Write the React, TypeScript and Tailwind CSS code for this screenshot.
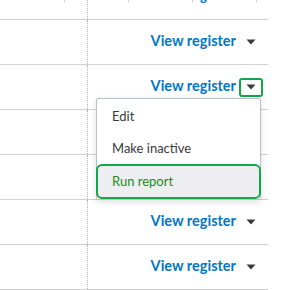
import React from "react";

function Caret({ focused }: { focused?: boolean }) {
  return (
    <div
      className={
        "w-[24px] h-[19px] flex items-center justify-center rounded-[3px] border-2 " +
        (focused ? "border-[#10a84a]" : "border-transparent")
      }
    >
      <svg width="10" height="6" viewBox="0 0 10 6">
        <path d="M0.5 0.5 L9.5 0.5 L5 5.5 Z" fill="#393a3d" />
      </svg>
    </div>
  );
}

function Row({ focused, showLink = true }: { focused?: boolean; showLink?: boolean }) {
  return (
    <div className="h-[45px] w-[268px] flex border-b border-[#d0d0d0]">
      <div className="w-[88px] shrink-0 border-r border-dotted border-[#b0b0b0]" />
      <div className="flex-1 flex items-center justify-end pr-[5px] gap-[3px]">
        {showLink && (
          <>
            <span className="text-[#0077c5] font-bold text-[14.5px] leading-none pb-[2px]">
              View register
            </span>
            <Caret focused={focused} />
          </>
        )}
      </div>
    </div>
  );
}

export default function App() {
  return (
    <div
      className="relative w-[281px] h-[290px] overflow-hidden bg-white"
      style={{ fontFamily: "Lato, 'Open Sans', Arial, sans-serif" }}
    >
      <div className="relative h-[20px] w-[268px] flex border-b border-[#d0d0d0]">
        <div className="w-[88px] shrink-0 border-r border-dotted border-[#b0b0b0]" />
        <div className="absolute top-0 left-[64px] w-px h-[2px] bg-[#d0d0d0]" />
        <div className="absolute top-0 left-[128px] w-px h-[2px] bg-[#d0d0d0]" />
        <div className="absolute top-0 left-[192px] w-px h-[2px] bg-[#d0d0d0]" />
        <div className="absolute top-0 left-[256px] w-px h-[2px] bg-[#d0d0d0]" />
        <span className="absolute top-[-10px] left-[200px] text-[13px] font-bold text-[#0077c5] leading-none">
          g
        </span>
      </div>
      <Row />
      <Row focused />
      <Row showLink={false} />
      <Row showLink={false} />
      <Row />
      <Row />

      <div className="absolute left-[96px] top-[98px] w-[165px] h-[102px] bg-white border border-[#babec5] rounded-[2px] shadow-[0_2px_6px_rgba(0,0,0,0.12)] pt-[2px] flex flex-col">
        <div className="h-[32px] flex items-center pl-[15px] text-[13px] text-[#393a3d]">Edit</div>
        <div className="h-[32px] flex items-center pl-[15px] text-[13px] text-[#393a3d]">Make inactive</div>
        <div className="h-[35px] -mx-[1px] flex items-center pl-[14px] text-[13px] text-[#1e8a22] bg-[#eceef1] border-2 border-[#10a84a] rounded-[6px]">
          Run report
        </div>
      </div>
    </div>
  );
}
